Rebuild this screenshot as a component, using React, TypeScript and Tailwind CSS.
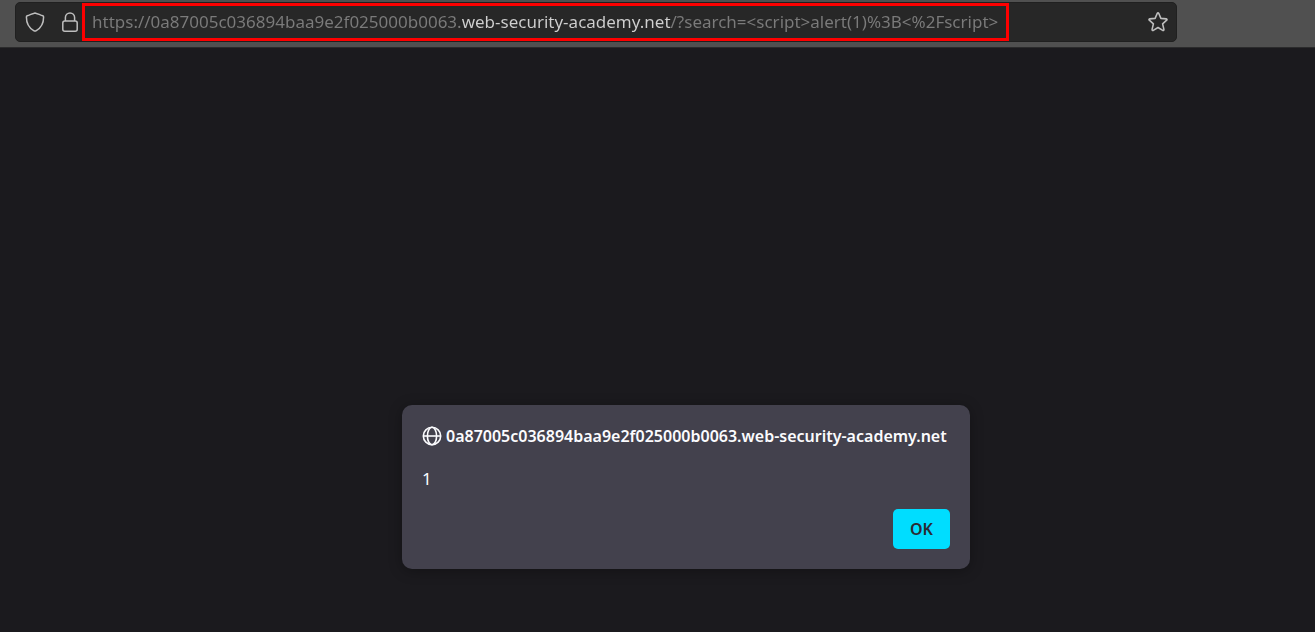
import { useState } from "react";

const HOST = "0a87005c036894baa9e2f025000b0063.web-security-academy.net";

function ShieldIcon() {
  return (
    <svg viewBox="0 0 20 20" className="size-5" fill="none" stroke="currentColor" strokeWidth="1.5" strokeLinejoin="round">
      <path d="M10 .9 C8.9 1 4.6 3 2.2 3.8 Q1.4 4.1 1.4 5 C1.4 11.2 3.8 15.8 8.7 18.6 Q10 19.4 11.3 18.6 C16.2 15.8 18.6 11.2 18.6 5 Q18.6 4.1 17.8 3.8 C15.4 3 11.1 1 10 .9 Z" />
    </svg>
  );
}

function LockIcon() {
  return (
    <svg viewBox="0 0 20 20" className="size-5" fill="none" stroke="currentColor" strokeWidth="1.5">
      <path d="M5.4 9 V5.6 a4.6 4.6 0 0 1 9.2 0 V9" />
      <rect x="2.8" y="9" width="14.4" height="10.2" rx="2" />
    </svg>
  );
}

function StarIcon() {
  return (
    <svg viewBox="0 0 20 20" className="size-5" fill="none" stroke="currentColor" strokeWidth="1.6" strokeLinejoin="round">
      <path d="M9.2 1.5 Q10 .3 10.8 1.5 L12.9 6.4 L18.3 6.9 Q19.5 7.2 18.7 8.2 L14.6 11.9 L15.9 17.4 Q16 18.8 14.7 18.4 L10 15.5 L5.3 18.4 Q4 18.8 4.1 17.4 L5.4 11.9 L1.3 8.2 Q.5 7.2 1.7 6.9 L7.1 6.4 Z" />
    </svg>
  );
}

function GlobeIcon() {
  return (
    <svg viewBox="0 0 20 20" className="size-5 shrink-0" fill="none" stroke="currentColor" strokeWidth="1.6">
      <circle cx="10" cy="10" r="8.7" />
      <ellipse cx="10" cy="10" rx="4.6" ry="8.7" />
      <path d="M1.3 10 H18.7" />
    </svg>
  );
}

export default function App() {
  const [url, setUrl] = useState(`https://${HOST}/?search=<script>alert(1)%3B<%2Fscript>`);
  const [open, setOpen] = useState(true);

  return (
    <div className="flex min-h-screen flex-col bg-[#1b1a1e] font-['Noto_Sans',sans-serif]">
      <header className="border-b border-[#2b2b2c] bg-[#505050] pt-0.5 pr-[138px] pb-[5px] pl-[15px]">
        <div className="flex h-10 items-center rounded-[5px] border border-[#202020] bg-[#272727] pr-2 pl-[9px] text-[#bebebe]">
          <button type="button" aria-label="Tracking protection"><ShieldIcon /></button>
          <button type="button" aria-label="Connection security" className="ml-[15px]"><LockIcon /></button>
          <div className="mr-auto ml-0.5 w-[927px] border-3 border-[#fe0000]">
            <input
              type="text"
              aria-label="Address"
              value={url}
              onChange={(e) => setUrl(e.target.value)}
              spellCheck={false}
              className="block h-8 w-full bg-[linear-gradient(to_right,#7b7b7b_376px,#d0d0d0_376px,#d0d0d0_586px,#7b7b7b_586px)] bg-clip-text px-[7px] pb-0.5 text-[17px] text-transparent outline-none"
            />
          </div>
          <button type="button" aria-label="Bookmark this page"><StarIcon /></button>
        </div>
      </header>

      <main className="flex flex-1 items-end justify-center pb-[63px] pl-[57px]">
        {open && (
          <div role="alertdialog" aria-labelledby="dialog-title" aria-describedby="dialog-text" className="w-[568px] rounded-[10px] bg-[#43414d] p-5 text-[#fbfbfe] shadow-[0_2px_14px_rgba(0,0,0,0.3)]">
            <div className="flex h-[22px] items-center gap-1">
              <GlobeIcon />
              <h1 id="dialog-title" className="text-[16px] font-semibold whitespace-nowrap">{HOST}</h1>
            </div>
            <p id="dialog-text" className="mt-5 text-[17px] leading-6">1</p>
            <div className="mt-[18px] flex justify-end">
              <button type="button" onClick={() => setOpen(false)} className="h-10 w-[57px] rounded-[5px] bg-[#00ddff] text-[16px] font-semibold text-[#2b2a33]">OK</button>
            </div>
          </div>
        )}
      </main>
    </div>
  );
}
